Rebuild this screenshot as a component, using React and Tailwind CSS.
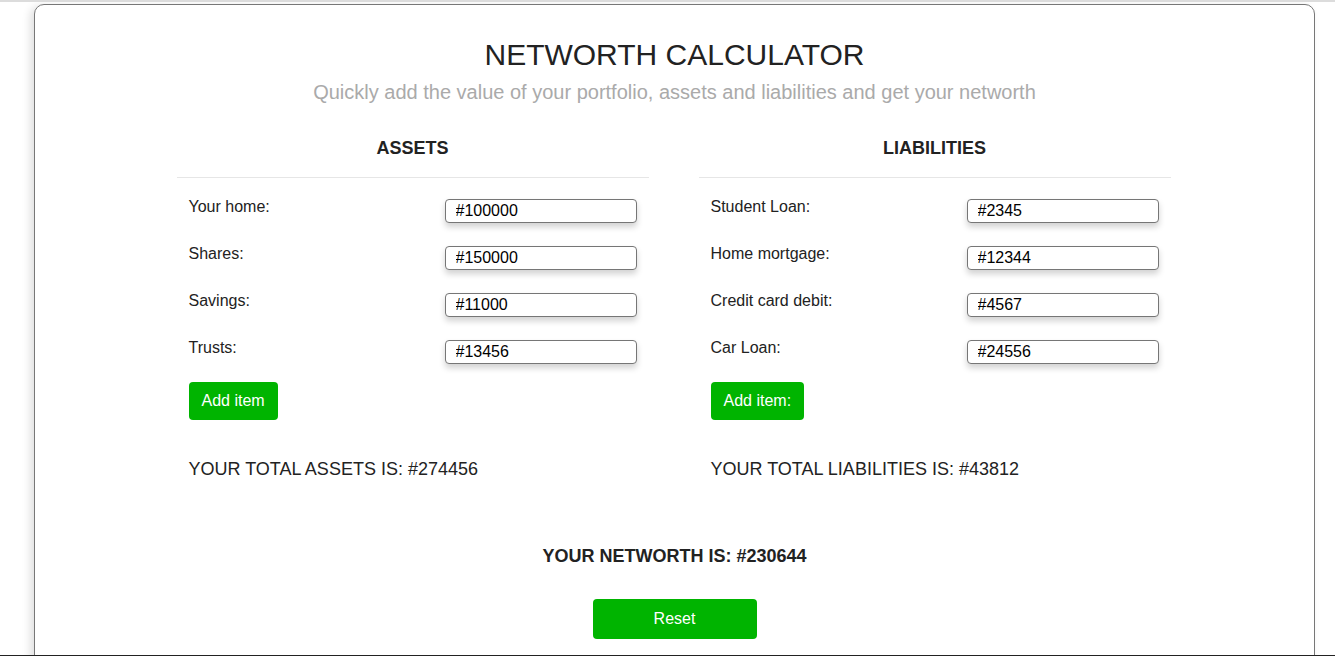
import React from "react";

const assets = [
  ["Your home:", "#100000"],
  ["Shares:", "#150000"],
  ["Savings:", "#11000"],
  ["Trusts:", "#13456"],
];
const liabilities = [
  ["Student Loan:", "#2345"],
  ["Home mortgage:", "#12344"],
  ["Credit card debit:", "#4567"],
  ["Car Loan:", "#24556"],
];

function Column({ title, rows, button, total }) {
  return (
    <div className="w-[472px] flex flex-col">
      <h2 className="text-center font-bold text-[18px] leading-[20px] text-[#222] h-[39px]">{title}</h2>
      <div className="border-t border-[#e6e6e6]" />
      <div className="flex flex-col gap-[21px] px-3 pt-[19px]">
        {rows.map(([label, value]) => (
          <div key={label} className="flex justify-between items-start">
            <span className="text-[16px] leading-[20px] text-[#222]">{label}</span>
            <input
              readOnly
              value={value}
              className="mt-[2px] w-[192px] h-[24px] border border-[#767676] rounded-[4px] pl-[10px] text-[16px] text-black bg-white shadow-[0_4px_6px_rgba(0,0,0,0.18)] outline-none"
            />
          </div>
        ))}
      </div>
      <div className="px-3 mt-[18px]">
        <button className="h-[38px] px-[13px] bg-[#00b400] text-white text-[16px] rounded-[4px]">{button}</button>
      </div>
      <p className="px-3 mt-[37px] text-[18px] leading-[24px] text-[#222]">{total}</p>
    </div>
  );
}

export default function App() {
  return (
    <div
      className="h-[656px] overflow-hidden bg-white border-t-2 border-[#dcdcdc] border-b border-b-[#222] relative"
      style={{ fontFamily: '"Liberation Sans", Arial, sans-serif' }}
    >
      <div className="ml-[34px] mr-[20px] mt-[2px] h-[700px] border border-[#777] rounded-[10px] bg-white shadow-[-4px_2px_8px_rgba(0,0,0,0.12)]">
        <h1 className="text-center text-[30px] leading-[36px] text-[#222] pt-[32px]">NETWORTH CALCULATOR</h1>
        <p className="text-center text-[20px] leading-[24px] text-[#aaa] mt-[7px]">
          Quickly add the value of your portfolio, assets and liabilities and get your networth
        </p>
        <div className="flex justify-center gap-[50px] mt-[34px] pr-[2px]">
          <Column title="ASSETS" rows={assets} button="Add item" total="YOUR TOTAL ASSETS IS: #274456" />
          <Column title="LIABILITIES" rows={liabilities} button="Add item:" total="YOUR TOTAL LIABILITIES IS: #43812" />
        </div>
        <p className="text-center font-bold text-[18px] leading-[20px] text-[#222] mt-[65px]">YOUR NETWORTH IS: #230644</p>
        <div className="flex justify-center mt-[33px]">
          <button className="w-[164px] h-[40px] bg-[#00b400] text-white text-[16px] rounded-[4px]">Reset</button>
        </div>
      </div>
    </div>
  );
}
